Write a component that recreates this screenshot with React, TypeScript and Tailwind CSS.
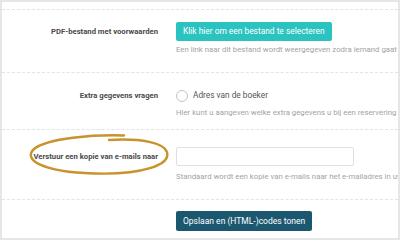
import React from "react";

const font = { fontFamily: "Roboto, 'Liberation Sans', sans-serif" };

function Row({
  label,
  className,
  children,
}: {
  label?: string;
  className: string;
  children: React.ReactNode;
}) {
  return (
    <div className={`grid grid-cols-[156px_1fr] gap-x-[18px] border-t border-dashed border-[#e3e3e3] ${className}`}>
      <div className="flex justify-end items-start">
        {label && (
          <span className="text-[7.7px] font-bold text-[#4a4a4a] leading-[19px] whitespace-nowrap">{label}</span>
        )}
      </div>
      <div className="min-w-0 overflow-hidden">{children}</div>
    </div>
  );
}

export default function App() {
  return (
    <div className="relative w-[400px] h-[240px] overflow-hidden bg-white border-2 border-[#e6e6e6]" style={font}>
      <div className="h-[7px]" />

      <Row label="PDF-bestand met voorwaarden" className="h-[63px] pt-[12px]">
        <button className="block h-[19px] px-[7px] rounded-[2px] bg-[#2bc3bf] text-white text-[8.4px] leading-[19px] whitespace-nowrap">
          Klik hier om een bestand te selecteren
        </button>
        <p className="mt-[3px] text-[7.8px] leading-[11px] text-[#a3a3a3] whitespace-nowrap">
          Een link naar dit bestand wordt weergegeven zodra iemand gaat boeken.
        </p>
      </Row>

      <Row label="Extra gegevens vragen" className="h-[57px] pt-[13px]">
        <label className="flex items-center gap-[5px] h-[19px]">
          <span className="w-[12px] h-[12px] rounded-full border border-[#c4c4c4] bg-white" />
          <span className="text-[8.3px] text-[#555]">Adres van de boeker</span>
        </label>
        <p className="mt-[2px] text-[7.8px] leading-[11px] text-[#a3a3a3] whitespace-nowrap">
          Hier kunt u aangeven welke extra gegevens u bij een reservering altijd wilt ontvangen.
        </p>
      </Row>

      <Row label="Verstuur een kopie van e-mails naar" className="h-[70px] pt-[17px]">
        <input className="block w-[178px] h-[19px] border border-[#e0e0e0] rounded-[2px] bg-white outline-none" />
        <p className="mt-[5px] text-[7.8px] leading-[11px] text-[#a3a3a3] whitespace-nowrap">
          Standaard wordt een kopie van e-mails naar het e-mailadres in uw account gestuurd.
        </p>
      </Row>

      <Row className="h-[41px] pt-[11px]">
        <button className="block h-[20px] px-[7px] rounded-[2px] bg-[#1b5870] text-white text-[8.5px] leading-[20px] whitespace-nowrap">
          Opslaan en (HTML-)codes tonen
        </button>
      </Row>

      <svg className="absolute left-0 top-0 pointer-events-none" width="400" height="240" viewBox="0 0 400 240">
        <path
          d="M 122 133.5 C 92 132.5, 46 136, 32 147 C 21 157, 38 170, 92 171.5 C 140 173, 169 163, 165 150 C 162 141, 140 136, 107 138"
          fill="none"
          stroke="#c8922c"
          strokeWidth="2.4"
          strokeLinecap="round"
        />
      </svg>
    </div>
  );
}
